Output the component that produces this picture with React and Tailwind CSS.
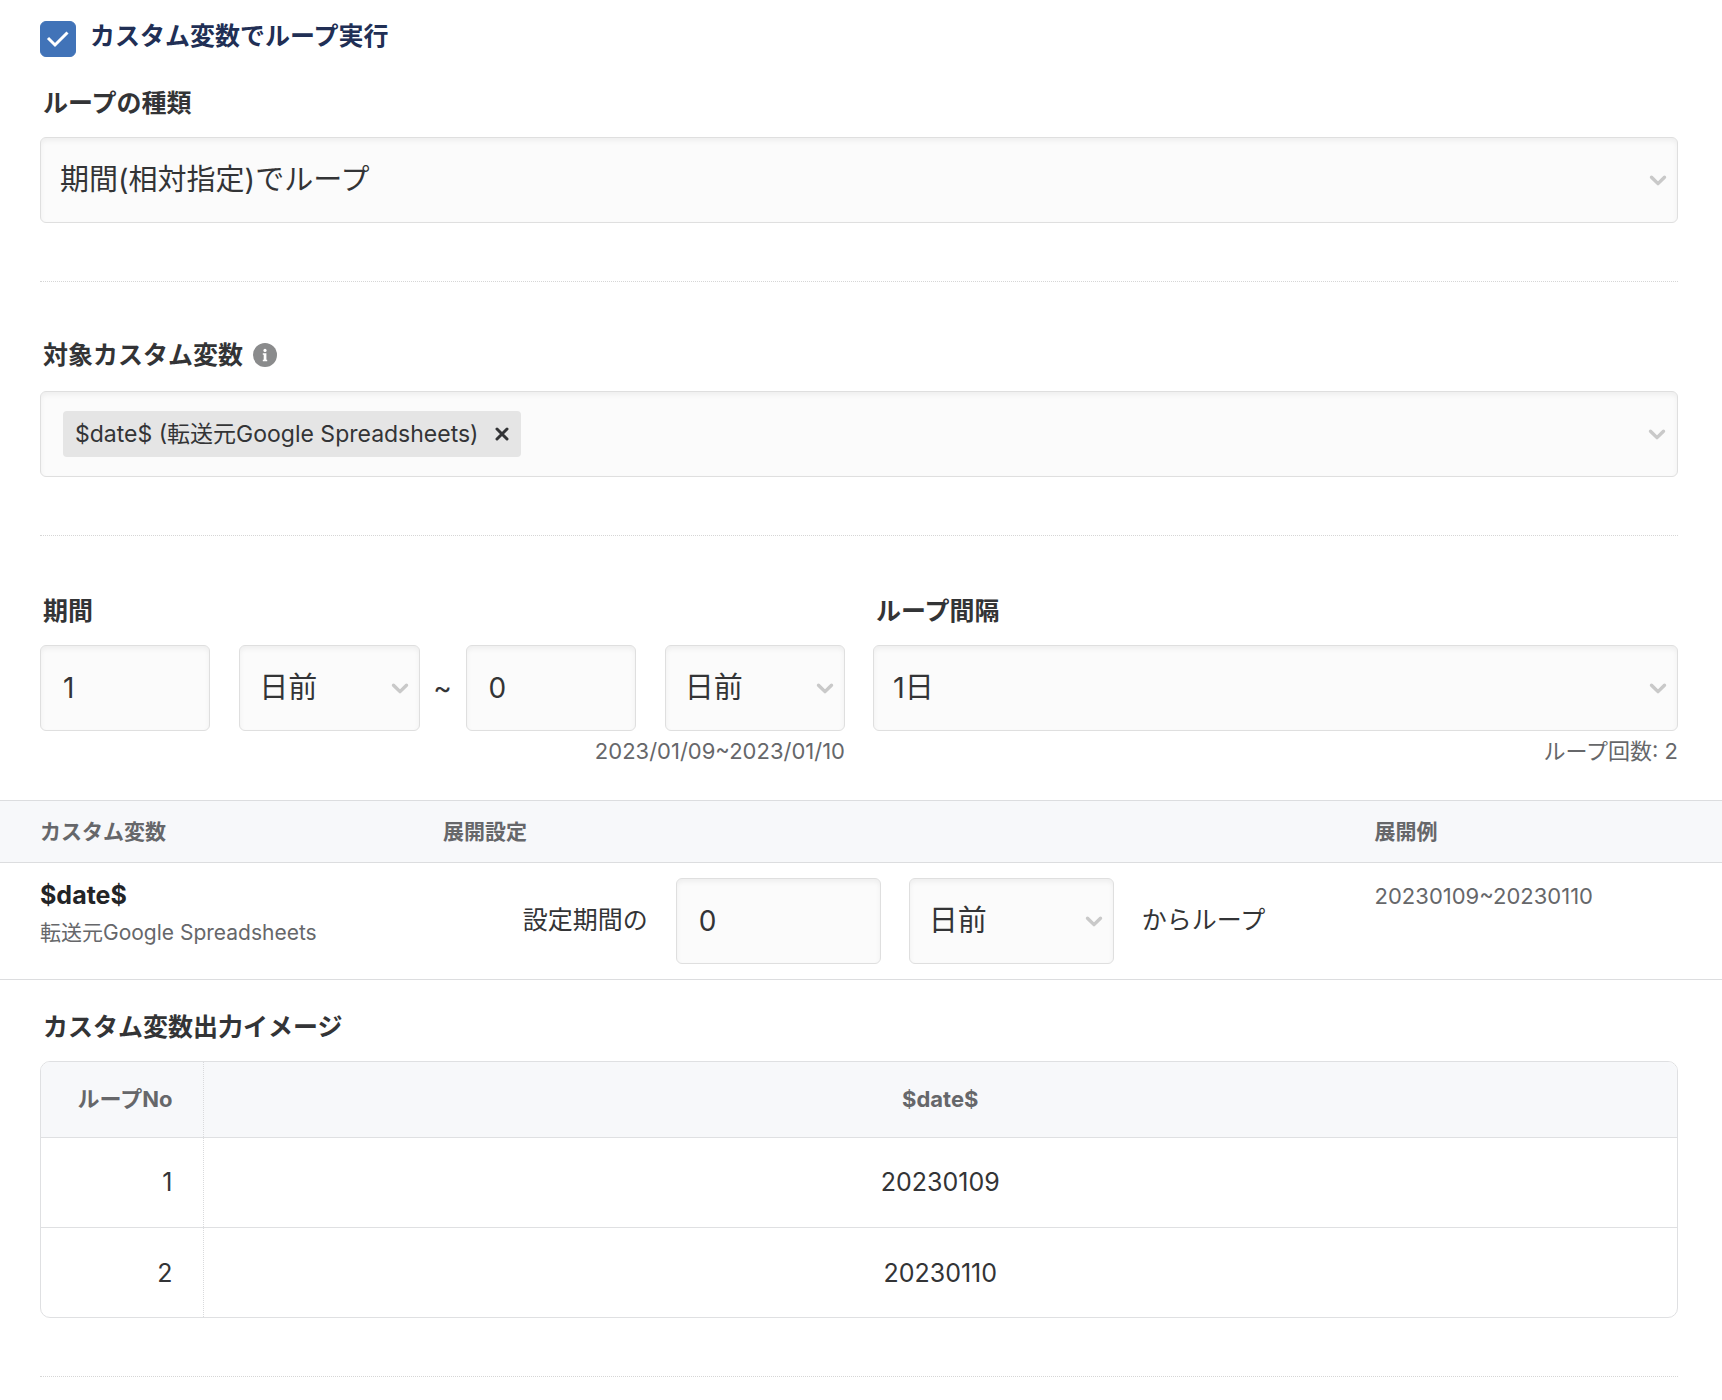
import React, { useState } from 'react';
import clsx from 'clsx';

const fieldClass =
  'h-[86px] w-full rounded-md border border-[#dfdfdf] bg-[#fbfbfb] text-[#333436] shadow-[inset_0_3px_5px_rgba(0,0,0,0.05)] outline-none focus:border-[#4173b8]';

const Chevron = () => (
  <svg
    className="pointer-events-none absolute top-1/2 right-[11px] -translate-y-1/2"
    width="18"
    height="12"
    viewBox="0 0 18 12"
    fill="none"
    stroke="#c9c9c9"
    strokeWidth="3.4"
    strokeLinecap="round"
    strokeLinejoin="round"
    aria-hidden="true"
  >
    <path d="M2.5 3.2 9 9.6l6.5-6.4" />
  </svg>
);

const Select = ({ options, className, ...props }) => (
  <div className={clsx('relative min-w-0', className)}>
    <select className={clsx(fieldClass, 'appearance-none pr-8 pl-[19px] text-[29px]')} {...props}>
      {options.map((option) => (
        <option key={option}>{option}</option>
      ))}
    </select>
    <Chevron />
  </div>
);

const TextField = ({ className, ...props }) => (
  <div className={clsx('min-w-0', className)}>
    <input type="text" className={clsx(fieldClass, 'px-[22px] text-[28px]')} {...props} />
  </div>
);

const Label = ({ as: Tag = 'label', className, ...props }) => (
  <Tag
    className={clsx('block pl-[3px] text-[25px] leading-9 font-bold text-[#333436]', className)}
    {...props}
  />
);

const Divider = () => <hr className="border-t border-dotted border-[#d6d6d6]" />;

const UNITS = ['日前', '週間前', 'か月前'];

const ROWS = [
  { no: 1, date: '20230109' },
  { no: 2, date: '20230110' }
];

const App = () => {
  const [enabled, setEnabled] = useState(true);
  const [targets, setTargets] = useState(['$date$ (転送元Google Spreadsheets)']);

  return (
    <main className="bg-white pb-6 font-['Inter','Noto_Sans_CJK_JP',sans-serif] text-[#333436]" lang="ja">
      <div className="pt-[18px] pr-11 pl-10">
        {/* Loop toggle */}
        <div className="flex items-start">
          <span className="relative mt-[3px] block size-9">
            <input
              id="loop-enabled"
              type="checkbox"
              checked={enabled}
              onChange={(e) => setEnabled(e.target.checked)}
              className="block size-9 appearance-none rounded-md border border-[#4173b8] bg-white checked:bg-[#4173b8]"
            />
            {enabled && (
              <svg
                className="pointer-events-none absolute inset-0"
                viewBox="0 0 36 36"
                fill="none"
                stroke="#fff"
                strokeWidth="3"
                aria-hidden="true"
              >
                <path d="m8 17 7 7 12.5-12.5" />
              </svg>
            )}
          </span>
          <label htmlFor="loop-enabled" className="pl-[14px] text-[25px] leading-9 font-bold text-[#212f55]">
            カスタム変数でループ実行
          </label>
        </div>

        {/* Loop type */}
        <Label htmlFor="loop-type" className="mt-7 mb-4">ループの種類</Label>
        <Select id="loop-type" options={['期間(相対指定)でループ', '期間(絶対指定)でループ', '文字列でループ']} />

        <div className="mt-[58px] mb-[55px]">
          <Divider />
        </div>

        {/* Target variables */}
        <div className="mb-[18px] flex items-center">
          <Label as="span" id="targets-label">対象カスタム変数</Label>
          <button type="button" aria-label="ヘルプ" className="ml-2.5">
            <svg className="block" width="24" height="24" viewBox="0 0 24 24" aria-hidden="true">
              <circle cx="12" cy="12" r="12" fill="#8a8b8c" />
              <g fill="#fff">
                <circle cx="12" cy="7.4" r="1.6" />
                <path d="M9.8 10.3h3.6v6.4h.8v1.5H9.8v-1.5h.9v-4.9h-.9z" />
              </g>
            </svg>
          </button>
        </div>
        <div role="group" aria-labelledby="targets-label" className={clsx(fieldClass, 'relative flex items-center gap-2 pl-[22px]')}>
          {targets.map((target) => (
            <span key={target} className="flex h-[46px] items-center rounded-sm bg-[#e5e5e5] px-3 text-[23px]">
              {target}
              <button
                type="button"
                aria-label={`${target}を削除`}
                className="ml-4"
                onClick={() => setTargets(targets.filter((t) => t !== target))}
              >
                <svg width="14" height="14" viewBox="0 0 14 14" stroke="#333436" strokeWidth="3" strokeLinecap="round" aria-hidden="true">
                  <path d="m2 2 10 10M12 2 2 12" />
                </svg>
              </button>
            </span>
          ))}
          <Chevron />
        </div>

        <div className="mt-[58px] mb-[57px]">
          <Divider />
        </div>

        {/* Period / interval */}
        <div className="grid grid-cols-2 gap-7">
          <div>
            <Label htmlFor="period-from" className="mb-4">期間</Label>
            <div className="flex items-center">
              <TextField id="period-from" defaultValue="1" className="flex-[170]" />
              <Select aria-label="開始の単位" options={UNITS} className="ml-[29px] flex-[180]" />
              <span className="w-[46px] text-center text-[28px]">~</span>
              <TextField aria-label="終了" defaultValue="0" className="flex-[170]" />
              <Select aria-label="終了の単位" options={UNITS} className="ml-[29px] flex-[180]" />
            </div>
            <p className="mt-1 text-right text-[22px] leading-8 text-[#66676a]">2023/01/09~2023/01/10</p>
          </div>
          <div>
            <Label htmlFor="interval" className="mb-4">ループ間隔</Label>
            <Select id="interval" options={['1日', '1週間', '1か月']} />
            <p className="mt-1 text-right text-[22px] leading-8 text-[#66676a]">ループ回数: 2</p>
          </div>
        </div>
      </div>

      {/* Variable expansion settings */}
      <table className="mt-[33px] w-full table-fixed border-y border-[#dcdddf] text-left">
        <thead>
          <tr className="h-[62px] border-b border-[#dcdddf] bg-[#f7f8fa] text-[21px] text-[#66676a]">
            <th className="w-[23.4%] pl-10 font-bold">カスタム変数</th>
            <th className="w-[54.8%] pl-10 font-bold">展開設定</th>
            <th className="pl-7 font-bold">展開例</th>
          </tr>
        </thead>
        <tbody>
          <tr className="h-[117px] align-top">
            <td className="pt-4 pl-10">
              <div className="text-[25px] leading-8 font-bold text-[#232427]">$date$</div>
              <div className="mt-1 text-[21px] leading-9 text-[#66676a]">転送元Google Spreadsheets</div>
            </td>
            <td className="pt-[15px] pl-10">
              <div className="grid grid-cols-4 items-center gap-7 text-[25px]">
                <label htmlFor="offset" className="text-right">設定期間の</label>
                <TextField id="offset" defaultValue="0" />
                <Select aria-label="展開の単位" options={UNITS} />
                <span>からループ</span>
              </div>
            </td>
            <td className="pt-[17px] pl-7 text-[22px] leading-8 text-[#66676a]">20230109~20230110</td>
          </tr>
        </tbody>
      </table>

      {/* Output preview */}
      <div className="pt-[29px] pr-11 pl-10">
        <Label as="h2" className="mb-4">カスタム変数出力イメージ</Label>
        <div className="overflow-hidden rounded-[10px] border border-[#dfe0e2]">
          <table className="w-full">
            <thead>
              <tr className="h-[75px] bg-[#f7f8fa] text-[22px] text-[#66676a]">
                <th className="w-[162px] border-r border-dotted border-r-[#d9dadc] pr-[30px] text-right font-bold">ループNo</th>
                <th className="font-bold">$date$</th>
              </tr>
            </thead>
            <tbody>
              {ROWS.map((row) => (
                <tr key={row.no} className="h-[90px] border-t border-[#dfe0e2] text-[25px]">
                  <td className="border-r border-dotted border-r-[#d9dadc] pt-0.5 pr-[30px] text-right">{row.no}</td>
                  <td className="pt-0.5 text-center">{row.date}</td>
                </tr>
              ))}
            </tbody>
          </table>
        </div>
        <div className="mt-[58px]">
          <Divider />
        </div>
      </div>
    </main>
  );
};

export default App;
